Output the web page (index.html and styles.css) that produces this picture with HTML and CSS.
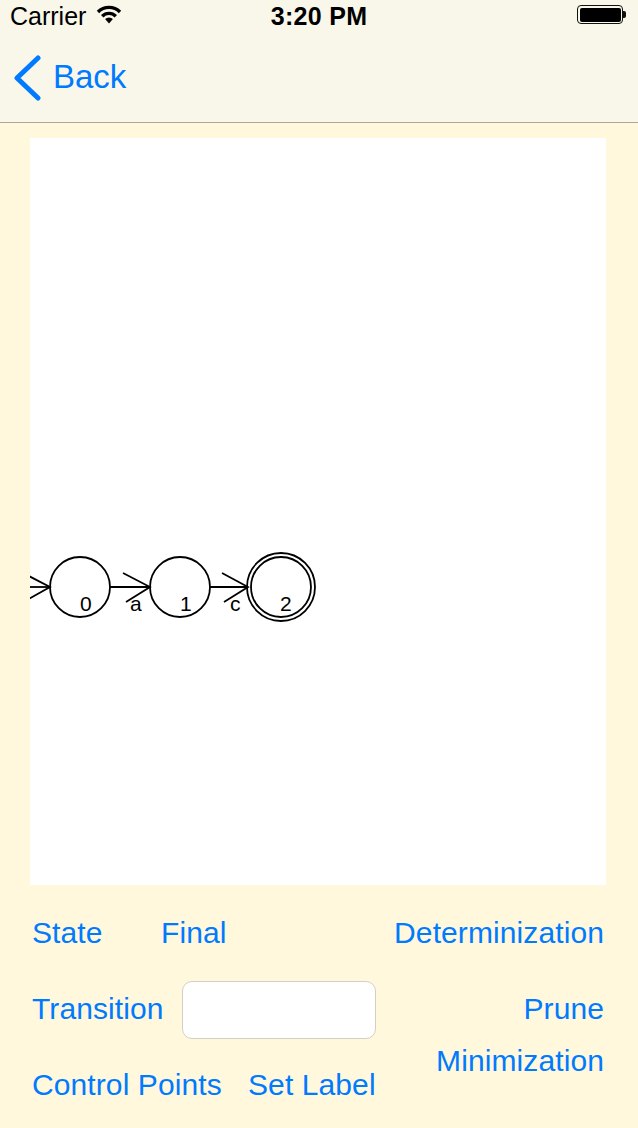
FILE: index.html
```html
<!DOCTYPE html>
<html>
<head>
<meta charset="utf-8">
<link rel="stylesheet" href="styles.css">
</head>
<body>
<div class="screen">
  <header class="topbar">
    <div class="status">
      <div class="status-left">
        <span class="carrier">Carrier</span>
        <svg class="wifi" width="26" height="19" viewBox="0 0 26 19">
          <path d="M13 18.5 L9.1 14.1 A5.4 5.4 0 0 1 16.9 14.1 Z" fill="#000"/>
          <path d="M6.2 11.2 A9.5 9.5 0 0 1 19.8 11.2" fill="none" stroke="#000" stroke-width="3.4"/>
          <path d="M2 7 A15.5 15.5 0 0 1 24 7" fill="none" stroke="#000" stroke-width="3.4"/>
        </svg>
      </div>
      <div class="time">3:20 PM</div>
      <div class="status-right">
        <span class="battery"><span class="battery-fill"></span></span><span class="battery-nub"></span>
      </div>
    </div>
    <nav class="navbar">
      <a class="back">
        <svg class="chevron" width="30" height="46" viewBox="0 0 30 46">
          <path d="M26 3 L5 23 L26 43" fill="none" stroke="#007aff" stroke-width="5" stroke-linecap="round" stroke-linejoin="round"/>
        </svg>
        <span class="back-label">Back</span>
      </a>
    </nav>
  </header>

  <main class="content">
    <div class="canvas">
      <svg class="diagram" width="576" height="747" viewBox="30 138 576 747">
        <g fill="none" stroke="#000" stroke-width="1.8">
          <line x1="20" y1="587" x2="50" y2="587"/>
          <polyline points="23,573 50,587 25,601"/>
          <circle cx="80" cy="587" r="30"/>
          <line x1="110" y1="587" x2="150" y2="587"/>
          <polyline points="123,573 150,587 126,602"/>
          <circle cx="180" cy="587" r="30"/>
          <line x1="210" y1="587" x2="247" y2="587"/>
          <polyline points="222,573 248,587 224,602"/>
          <circle cx="281" cy="587" r="34"/>
          <circle cx="281" cy="587" r="30"/>
        </g>
        <g class="labels">
          <text x="80" y="611">0</text>
          <text x="130" y="611">a</text>
          <text x="180" y="611">1</text>
          <text x="230" y="611">c</text>
          <text x="280" y="611">2</text>
        </g>
      </svg>
    </div>

    <div class="controls">
      <div class="left">
        <div class="row">
          <span class="btn w-state">State</span>
          <span class="btn">Final</span>
        </div>
        <div class="row">
          <span class="btn w-trans">Transition</span>
          <input class="field" type="text">
        </div>
        <div class="row">
          <span class="btn w-cp">Control Points</span>
          <span class="btn">Set Label</span>
        </div>
      </div>
      <div class="right">
        <span class="btn">Determinization</span>
        <span class="btn prune">Prune</span>
        <span class="btn mini">Minimization</span>
      </div>
    </div>
  </main>
</div>
</body>
</html>
```

FILE: styles.css
```css
html, body {
  margin: 0;
  padding: 0;
}

body {
  width: 638px;
  height: 1128px;
  overflow: hidden;
  background: #fff8dc;
  font-family: "Liberation Sans", Arial, sans-serif;
}

.screen {
  width: 638px;
  height: 1128px;
  display: flex;
  flex-direction: column;
}

.topbar {
  background: #f8f7ea;
  border-bottom: 1px solid #aca796;
}

.status {
  height: 32px;
  display: grid;
  grid-template-columns: 1fr auto 1fr;
  align-items: center;
  color: #000;
}

.status-left {
  display: flex;
  align-items: center;
  padding-left: 10px;
}

.carrier {
  font-size: 25px;
  line-height: 32px;
}

.wifi {
  margin-left: 10px;
  margin-bottom: 3px;
}

.time {
  font-size: 25px;
  font-weight: bold;
  line-height: 32px;
  letter-spacing: 0.3px;
}

.status-right {
  display: flex;
  align-items: center;
  justify-content: flex-end;
  padding-right: 12px;
  margin-bottom: 3px;
}

.battery {
  width: 46px;
  height: 19px;
  box-sizing: border-box;
  border: 1.5px solid #111;
  border-radius: 4px;
  padding: 1.5px;
  display: flex;
}

.battery-fill {
  flex: 1;
  background: #000;
  border-radius: 2px;
}

.battery-nub {
  width: 3px;
  height: 7px;
  background: #111;
  border-radius: 0 2px 2px 0;
}

.navbar {
  height: 90px;
  display: flex;
  align-items: center;
}

.back {
  display: flex;
  align-items: center;
  padding-left: 12px;
  color: #007aff;
}

.chevron {
  display: block;
  margin-top: 1px;
}

.back-label {
  font-size: 33px;
  line-height: 40px;
  margin-left: 11px;
}

.content {
  flex: 1;
  padding: 15px 32px 0 30px;
}

.canvas {
  width: 576px;
  height: 747px;
  background: #ffffff;
  overflow: hidden;
}

.diagram {
  display: block;
}

.labels text {
  font-family: "Liberation Sans", Arial, sans-serif;
  font-size: 21px;
  fill: #000;
}

.controls {
  display: flex;
  justify-content: space-between;
  padding: 10px 2px 0 2px;
}

.btn {
  font-size: 30px;
  line-height: 36px;
  color: #007aff;
  letter-spacing: 0.1px;
  white-space: nowrap;
}

.left {
  display: flex;
  flex-direction: column;
}

.row {
  height: 76px;
  display: flex;
  align-items: center;
}

.w-state { width: 129px; }
.w-trans { width: 150px; }
.w-cp { width: 216px; }

.field {
  width: 194px;
  height: 58px;
  box-sizing: border-box;
  margin: 1px 0 0 0;
  border: 1px solid #d2cfc4;
  border-radius: 10px;
  background: #ffffff;
  font-size: 28px;
  padding: 0 12px;
  outline: none;
}

.right {
  display: flex;
  flex-direction: column;
  align-items: flex-end;
  padding-top: 20px;
}

.prune {
  margin-top: 40px;
}

.mini {
  margin-top: 16px;
}
```
